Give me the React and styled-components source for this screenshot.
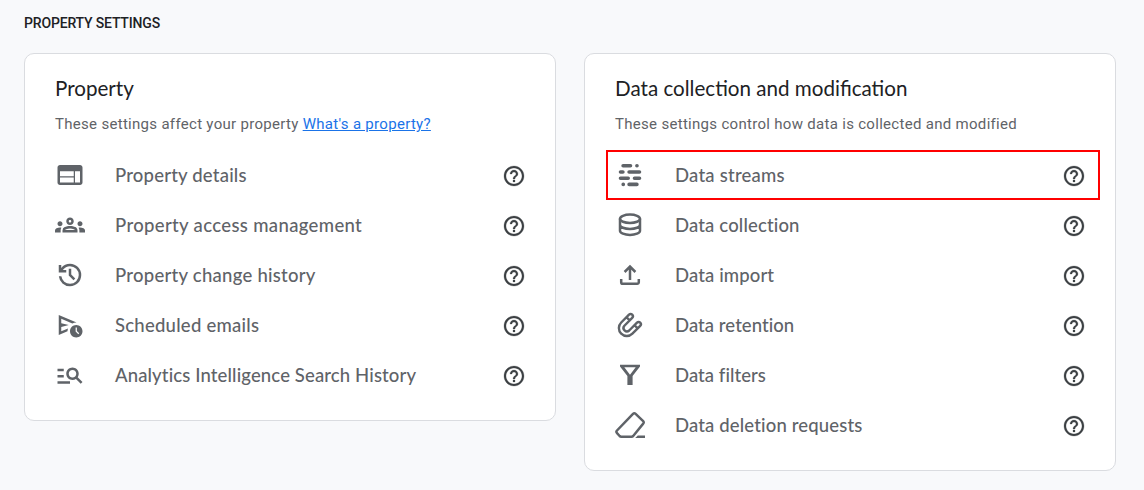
import React from 'react';
import styled, { createGlobalStyle } from 'styled-components';
import { MdWeb, MdOutlineGroups, MdManageSearch, MdHelpOutline, MdOutlineScheduleSend } from 'react-icons/md';

const GlobalStyle = createGlobalStyle`
  * { box-sizing: border-box; }
  body { margin: 0; min-height: 490px; background: #f8f9fb; }
`;

const Page = styled.main`
  width: 1144px;
  height: 490px;
  padding: 13px 24px 0;
  font-family: Roboto, "Liberation Sans", sans-serif;
`;

const SectionTitle = styled.h1`
  margin: 0 0 20px;
  font-size: 14px;
  line-height: 20px;
  font-weight: 500;
  letter-spacing: -0.17px;
  color: #202124;
`;

const Cards = styled.div`
  display: flex;
  align-items: flex-start;
  gap: 28px;
`;

const Card = styled.section`
  width: 532px;
  padding: 20px 15px 20px 21px;
  background: #fff;
  border: 1px solid #dadce0;
  border-radius: 10px;
`;

const CardTitle = styled.h2`
  margin: 0 9px;
  font-family: Lato, "Liberation Sans", sans-serif;
  font-size: 20.6px;
  line-height: 28px;
  font-weight: 400;
  color: #202124;
`;

const CardNote = styled.p`
  margin: 12px 9px 16px;
  font-size: 15px;
  line-height: 20px;
  letter-spacing: 0.3px;
  color: #5f6368;
  white-space: nowrap;
`;

const NoteLink = styled.a`
  color: #1a73e8;
  text-decoration: underline;
`;

const Row = styled.div`
  display: flex;
  align-items: center;
  height: 50px;
  padding: 0 12px 0 7px;
  border: 2px solid ${(p) => (p.$highlighted ? '#f00' : 'transparent')};
  color: #5f6368;
`;

const RowIcon = styled.span`
  display: flex;
  width: 30px;
  height: 30px;
  margin-right: 30px;
  svg { width: 30px; height: 30px; }
`;

const RowLabel = styled.span`
  flex: 1;
  font-family: Lato, "Liberation Sans", sans-serif;
  font-size: 18.5px;
  line-height: 24px;
  font-weight: 500;
  letter-spacing: ${(p) => p.$tracking}px;
  white-space: nowrap;
`;

const HelpIcon = styled(MdHelpOutline)`
  width: 24px;
  height: 24px;
  margin-top: 2px;
  color: #3c4043;
  path:not([fill='none']) {
    stroke: currentColor;
    stroke-width: 0.25px;
  }
  path[fill='none'] {
    stroke: none;
  }
`;

const Glyph = ({ children }) => (
  <svg viewBox="0 0 30 30" fill="none" stroke="currentColor" strokeWidth="2.5">{children}</svg>
);

const HistoryIcon = () => (
  <svg viewBox="0 0 24 24" fill="currentColor">
    <path d="M12 21q-3.45 0-6.012-2.287T3.05 13H5.1q.35 2.6 2.313 4.3T12 19q2.925 0 4.963-2.037T19 12t-2.037-4.963T12 5q-1.725 0-3.225.8T6.25 8H9v2H3V4h2v2.35q1.275-1.6 3.113-2.475T12 3q1.875 0 3.513.713t2.85 1.924t1.925 2.85T21 12t-.712 3.513t-1.925 2.85t-2.85 1.925T12 21m2.8-4.8L11 12.4V7h2v4.6l3.2 3.2z" />
  </svg>
);

const StreamsIcon = () => (
  <Glyph>
    <g strokeWidth="3.6" strokeLinecap="round">
      <path d="M8.1 5.8h7.4M21.9 5.8h.1M5.5 12h2.4M14.1 12h10.4M5.5 18.2h7.7M19.5 18.2h5M8.2 24.4h.1M14.1 24.4h7.8" />
    </g>
  </Glyph>
);

const DatabaseIcon = () => (
  <Glyph>
    <ellipse cx="15" cy="8.8" rx="10" ry="4.2" />
    <path d="M5 8.8v11.9c0 2.3 4.5 4.2 10 4.2s10-1.9 10-4.2V8.8M5 14.8c0 2.3 4.5 4.2 10 4.2s10-1.9 10-4.2" />
  </Glyph>
);

const ImportIcon = () => (
  <Glyph>
    <path d="M15 20V6.8M9.6 12l5.4-5.4 5.4 5.4M6.2 19v3.2a1.6 1.6 0 0 0 1.6 1.6h14.4a1.6 1.6 0 0 0 1.6-1.6V19" />
  </Glyph>
);

const MagnetIcon = () => (
  <Glyph>
    <path
      strokeWidth="2.4"
      d="M14 4.7 6.2 12.5A7.9 7.9 0 0 0 17.4 23.7L25.2 15.9A2.25 2.25 0 0 0 22 12.7L14.2 20.5A3.4 3.4 0 0 1 9.4 15.7L17.2 7.9A2.25 2.25 0 0 0 14 4.7ZM11.5 7.2l3.2 3.2M19.5 15.2l3.2 3.2"
    />
  </Glyph>
);

const FilterIcon = () => (
  <svg viewBox="0 0 30 30" fill="currentColor" fillRule="evenodd">
    <path d="M5 4.8H25V6.4L17.6 16V25H12.4V16L5 6.4ZM9.3 7.3 15 14.8 20.7 7.3Z" />
  </svg>
);

const EraserIcon = () => (
  <Glyph>
    <path d="M18 3.9 2 20.5a2 2 0 0 0 0 2.7l2.6 2.8q.7.7 1.7.7h10.2q1 0 1.7-.7L28.2 13.7a1.8 1.8 0 0 0 0-2.6L20.6 3.9a1.9 1.9 0 0 0-2.6 0Z" />
    <path fill="currentColor" stroke="none" d="M20.2 28l2.6-2.6H30V28Z" />
  </Glyph>
);

const propertyRows = [
  ['Property details', MdWeb, 0.2],
  ['Property access management', MdOutlineGroups, 0.35],
  ['Property change history', HistoryIcon, 0.26],
  ['Scheduled emails', MdOutlineScheduleSend, 0.24],
  ['Analytics Intelligence Search History', MdManageSearch, 0.13],
];

const dataRows = [
  ['Data streams', StreamsIcon, 0.23, true],
  ['Data collection', DatabaseIcon, 0.15],
  ['Data import', ImportIcon, 0.13],
  ['Data retention', MagnetIcon, 0.06],
  ['Data filters', FilterIcon, 0.06],
  ['Data deletion requests', EraserIcon, 0.15],
];

const SettingsRows = ({ rows }) => rows.map(([label, Icon, tracking, highlighted]) => (
  <Row key={label} $highlighted={highlighted}>
    <RowIcon><Icon /></RowIcon>
    <RowLabel $tracking={tracking}>{label}</RowLabel>
    <HelpIcon />
  </Row>
));

export default function App() {
  return (
    <Page>
      <GlobalStyle />
      <SectionTitle>PROPERTY SETTINGS</SectionTitle>
      <Cards>
        <Card>
          <CardTitle>Property</CardTitle>
          <CardNote>These settings affect your property <NoteLink>What's a property?</NoteLink></CardNote>
          <SettingsRows rows={propertyRows} />
        </Card>
        <Card>
          <CardTitle>Data collection and modification</CardTitle>
          <CardNote>These settings control how data is collected and modified</CardNote>
          <SettingsRows rows={dataRows} />
        </Card>
      </Cards>
    </Page>
  );
}
